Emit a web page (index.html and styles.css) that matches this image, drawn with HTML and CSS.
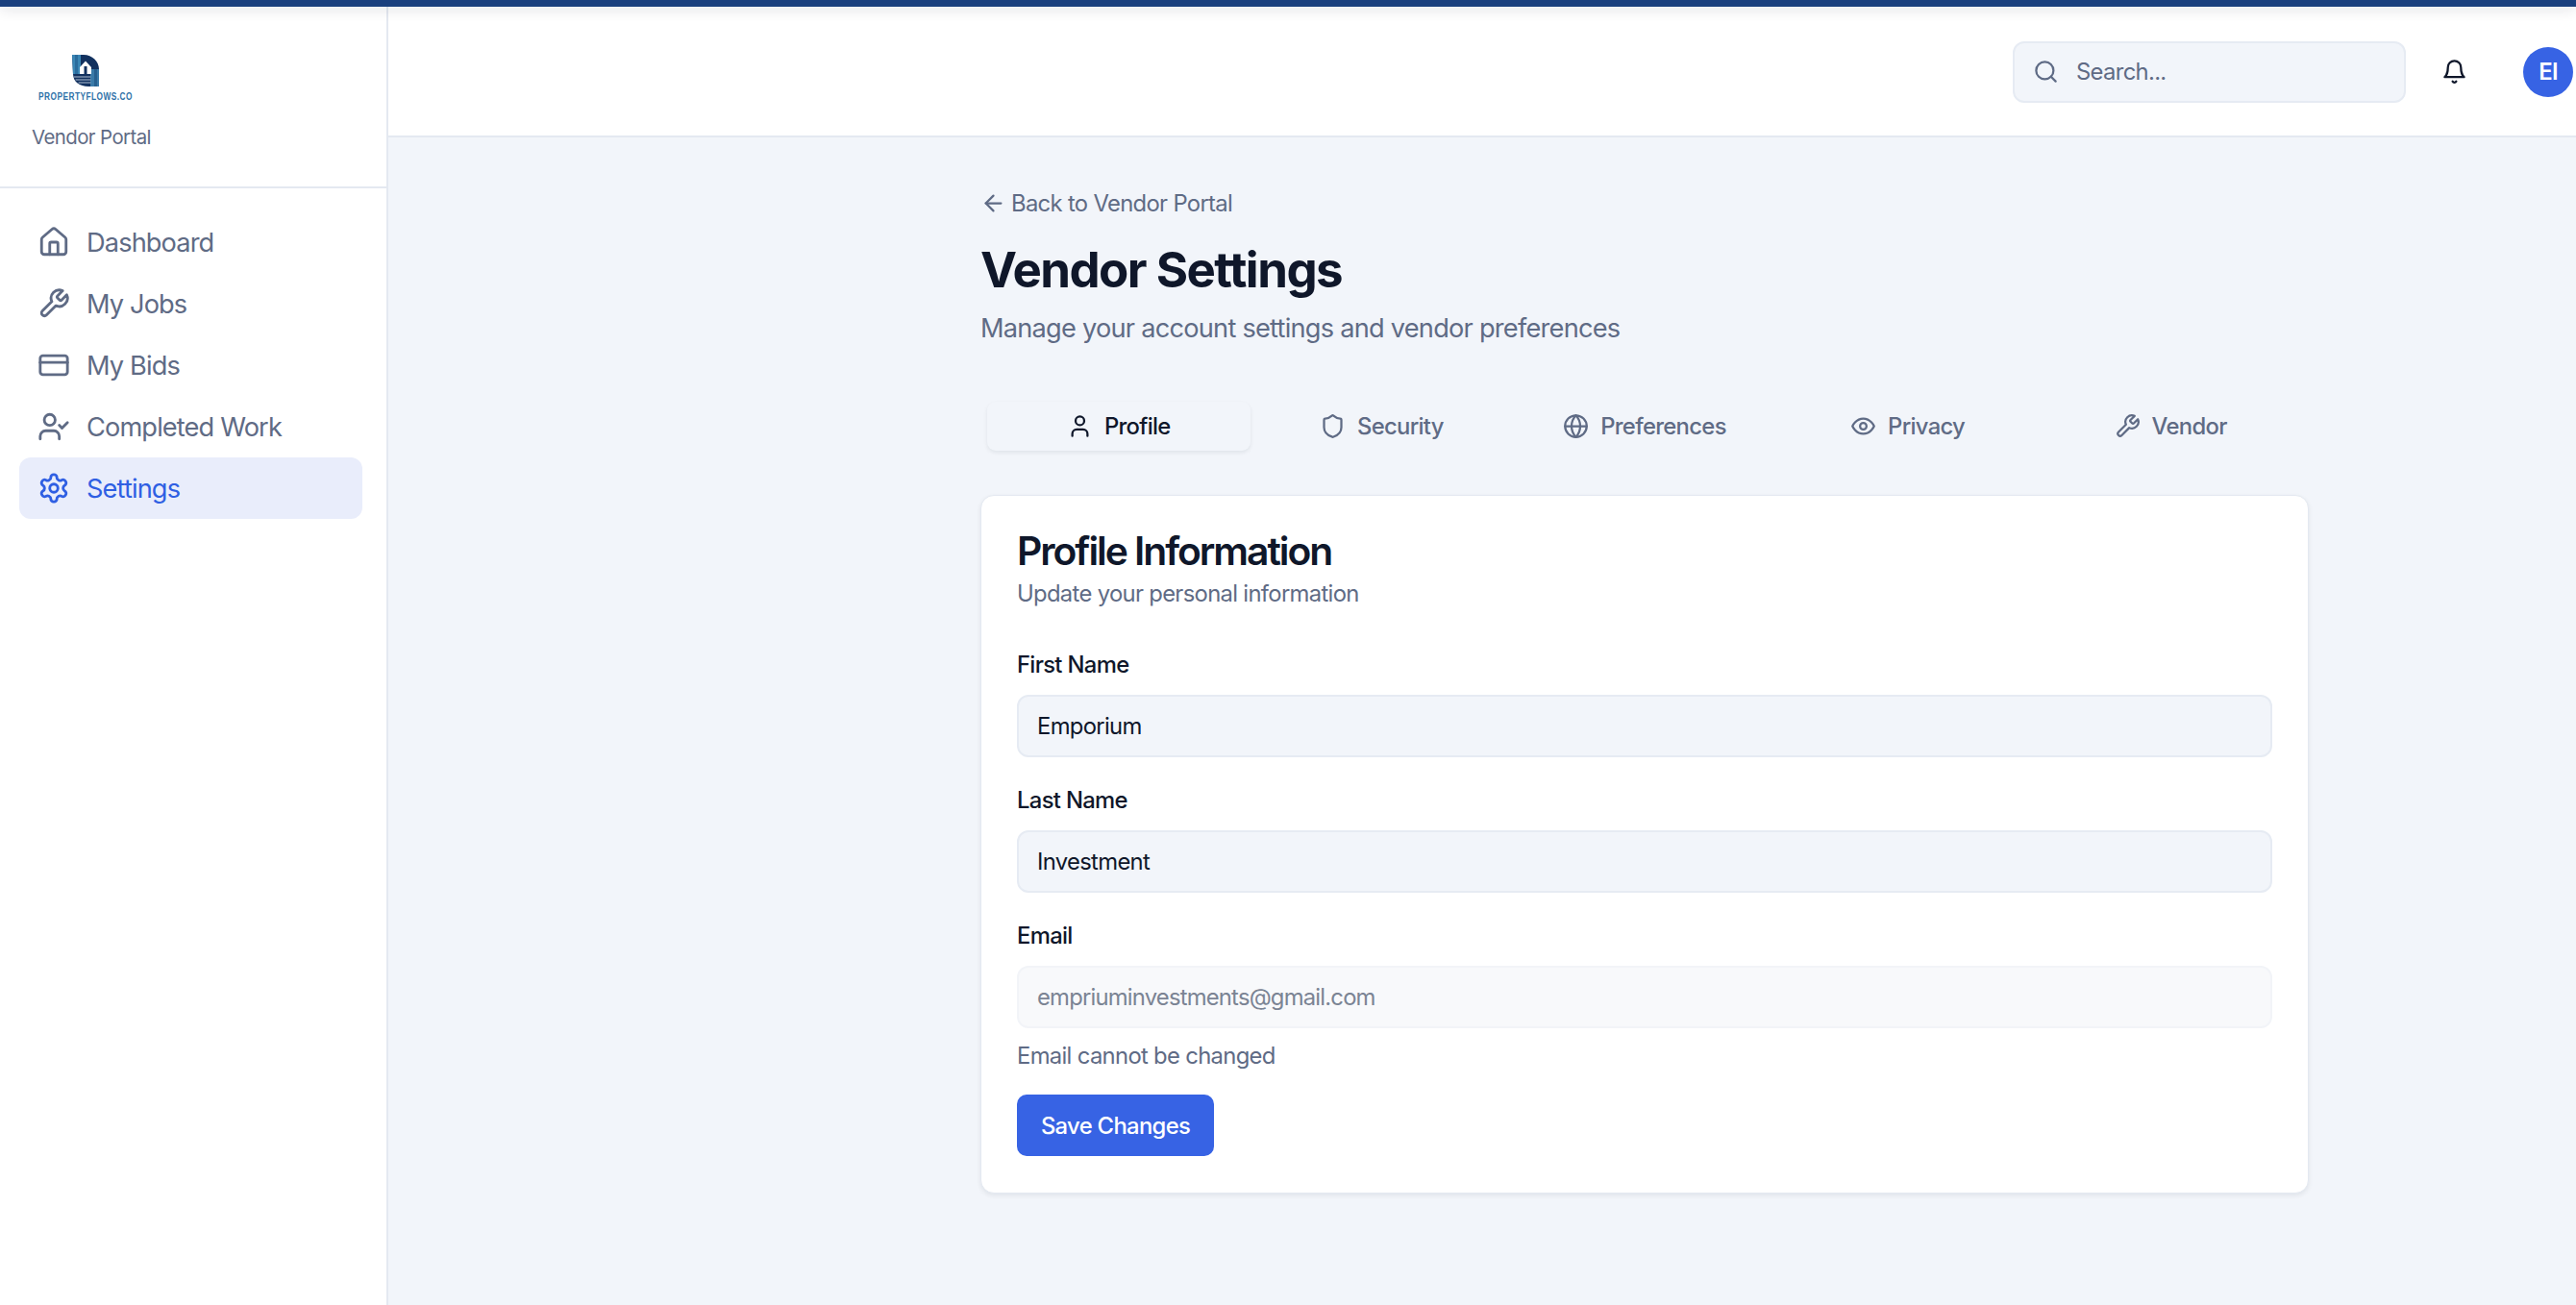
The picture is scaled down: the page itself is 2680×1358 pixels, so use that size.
FILE: index.html
```html
<!DOCTYPE html>
<html lang="en">
  <head>
    <meta charset="UTF-8" />
    <meta name="viewport" content="width=device-width, initial-scale=1.0" />
    <title>Vendor Settings</title>
    <link rel="stylesheet" href="styles.css">
  </head>
  <body>
    <div class="strip"></div>
    <div class="app">
      <aside class="sidebar">
        <div class="brand">
          <div class="logo">
            <svg class="logo-mark" viewBox="0 0 28 33">
              <path d="M0 0H12C21 0 28 7 28 15V33H17C8 33 1 28 1 20Z" fill="#12315f" />
              <path d="M0 0H9V20H1Z" fill="#3a86b5" />
              <path d="M3 0H6V20H3Z" fill="#2a6c9d" />
              <path d="M19 15H28V33H19Z" fill="#3a7aa8" />
              <path d="M23 15H26V33H23Z" fill="#27608f" />
              <path d="M8 13L14 6.500L20 13V20H8Z" fill="#fff" />
              <rect x="12.500" y="12" width="3" height="8" fill="#12315f" />
              <path d="M2 23H19M4 26H19M7 29H19" stroke="#dbe5ef" stroke-width="0.800" />
            </svg>
            <span class="logo-text">PROPERTYFLOWS.CO</span>
          </div>
          <p class="brand-sub">Vendor Portal</p>
        </div>
        <nav class="nav">
          <a class="nav-item">
            <svg class="nav-icon" viewBox="0 0 24 24"><path d="M15 21v-8a1 1 0 0 0-1-1h-4a1 1 0 0 0-1 1v8" /><path d="M3 10a2 2 0 0 1 .709-1.528l7-5.999a2 2 0 0 1 2.582 0l7 5.999A2 2 0 0 1 21 10v9a2 2 0 0 1-2 2H5a2 2 0 0 1-2-2z" /></svg>
            Dashboard
          </a>
          <a class="nav-item">
            <svg class="nav-icon" viewBox="0 0 24 24"><path d="M14.700 6.300a1 1 0 0 0 0 1.400l1.600 1.600a1 1 0 0 0 1.400 0l3.770-3.770a6 6 0 0 1-7.940 7.940l-6.910 6.910a2.120 2.120 0 0 1-3-3l6.910-6.910a6 6 0 0 1 7.940-7.940l-3.760 3.760z" /></svg>
            My Jobs
          </a>
          <a class="nav-item">
            <svg class="nav-icon" viewBox="0 0 24 24"><rect x="2" y="5" width="20" height="14" rx="2" /><path d="M2 10h20" /></svg>
            My Bids
          </a>
          <a class="nav-item">
            <svg class="nav-icon" viewBox="0 0 24 24"><path d="M16 21v-2a4 4 0 0 0-4-4H6a4 4 0 0 0-4 4v2" /><circle cx="9" cy="7" r="4" /><path d="M16 11l2 2 4-4" /></svg>
            Completed Work
          </a>
          <a class="nav-item active">
            <svg class="nav-icon" viewBox="0 0 24 24"><path d="M12.220 2h-.44a2 2 0 0 0-2 2v.18a2 2 0 0 1-1 1.730l-.43.25a2 2 0 0 1-2 0l-.15-.08a2 2 0 0 0-2.730.73l-.22.38a2 2 0 0 0 .73 2.730l.15.1a2 2 0 0 1 1 1.720v.51a2 2 0 0 1-1 1.740l-.15.09a2 2 0 0 0-.73 2.730l.22.38a2 2 0 0 0 2.730.73l.15-.08a2 2 0 0 1 2 0l.43.25a2 2 0 0 1 1 1.730V20a2 2 0 0 0 2 2h.44a2 2 0 0 0 2-2v-.18a2 2 0 0 1 1-1.730l.43-.25a2 2 0 0 1 2 0l.15.08a2 2 0 0 0 2.730-.73l.22-.39a2 2 0 0 0-.73-2.730l-.15-.08a2 2 0 0 1-1-1.740v-.5a2 2 0 0 1 1-1.740l.15-.09a2 2 0 0 0 .73-2.730l-.22-.38a2 2 0 0 0-2.730-.73l-.15.08a2 2 0 0 1-2 0l-.43-.25a2 2 0 0 1-1-1.730V4a2 2 0 0 0-2-2z" /><circle cx="12" cy="12" r="3" /></svg>
            Settings
          </a>
        </nav>
      </aside>

      <div class="main">
        <header class="topbar">
          <label class="search">
            <svg class="search-icon" viewBox="0 0 24 24"><circle cx="11" cy="11" r="8" /><path d="M21 21l-4.300-4.300" /></svg>
            <input class="search-input" type="text" placeholder="Search..." />
          </label>
          <svg class="bell" viewBox="0 0 24 24"><path d="M6 8a6 6 0 0 1 12 0c0 7 3 9 3 9H3s3-2 3-9" /><path d="M10.300 21a1.940 1.940 0 0 0 3.400 0" /></svg>
          <div class="avatar">EI</div>
        </header>

        <main class="content">
          <a class="back">
            <svg class="back-icon" viewBox="0 0 24 24"><path d="M12 19l-7-7 7-7" /><path d="M19 12H5" /></svg>
            Back to Vendor Portal
          </a>
          <h1 class="title">Vendor Settings</h1>
          <p class="subtitle">Manage your account settings and vendor preferences</p>

          <div class="tabs">
            <button class="tab active">
              <svg class="tab-icon" viewBox="0 0 24 24"><path d="M19 21v-2a4 4 0 0 0-4-4H9a4 4 0 0 0-4 4v2" /><circle cx="12" cy="7" r="4" /></svg>
              Profile
            </button>
            <button class="tab">
              <svg class="tab-icon" viewBox="0 0 24 24"><path d="M20 13c0 5-3.500 7.500-7.660 8.950a1 1 0 0 1-.67-.01C7.500 20.500 4 18 4 13V6a1 1 0 0 1 1-1c2 0 4.500-1.200 6.240-2.720a1.170 1.170 0 0 1 1.520 0C14.510 3.810 17 5 19 5a1 1 0 0 1 1 1z" /></svg>
              Security
            </button>
            <button class="tab">
              <svg class="tab-icon" viewBox="0 0 24 24"><circle cx="12" cy="12" r="10" /><path d="M12 2a14.500 14.500 0 0 0 0 20 14.500 14.500 0 0 0 0-20" /><path d="M2 12h20" /></svg>
              Preferences
            </button>
            <button class="tab">
              <svg class="tab-icon" viewBox="0 0 24 24"><path d="M2 12s3-7 10-7 10 7 10 7-3 7-10 7-10-7-10-7Z" /><circle cx="12" cy="12" r="3" /></svg>
              Privacy
            </button>
            <button class="tab">
              <svg class="tab-icon" viewBox="0 0 24 24"><path d="M14.700 6.300a1 1 0 0 0 0 1.400l1.600 1.600a1 1 0 0 0 1.400 0l3.770-3.770a6 6 0 0 1-7.940 7.940l-6.910 6.910a2.120 2.120 0 0 1-3-3l6.910-6.910a6 6 0 0 1 7.940-7.940l-3.760 3.760z" /></svg>
              Vendor
            </button>
          </div>

          <section class="card">
            <h2 class="card-title">Profile Information</h2>
            <p class="card-sub">Update your personal information</p>
            <form class="form">
              <label class="field-label">First Name</label>
              <input class="field" type="text" value="Emporium" />
              <label class="field-label">Last Name</label>
              <input class="field" type="text" value="Investment" />
              <label class="field-label">Email</label>
              <input class="field disabled" type="text" value="empriuminvestments@gmail.com" disabled />
              <p class="help">Email cannot be changed</p>
              <button class="save" type="button">Save Changes</button>
            </form>
          </section>
        </main>
      </div>
    </div>
  </body>
</html>
```

FILE: styles.css
```css
* {
  box-sizing: border-box;
  letter-spacing: -0.028em;
}

html,
body {
  height: 100%;
}

body {
  margin: 0;
  display: flex;
  flex-direction: column;
  overflow: hidden;
  background: #f2f5fa;
  color: #0f172a;
  font-family: Inter, "Liberation Sans", sans-serif;
}

p,
h1,
h2 {
  margin: 0;
}

svg {
  fill: none;
  stroke: currentColor;
  stroke-width: 2;
  stroke-linecap: round;
  stroke-linejoin: round;
  flex-shrink: 0;
}

.strip {
  position: relative;
  z-index: 2;
  height: 7px;
  background: #1a407e;
  box-shadow: 0 3px 14px rgba(15, 23, 42, 0.14);
}

.app {
  flex: 1;
  display: flex;
  min-height: 0;
}

/* sidebar */
.sidebar {
  width: 404px;
  background: #fff;
  border-right: 2px solid #e4e9f1;
}

.brand {
  height: 189px;
  padding: 50px 0 0 33px;
  border-bottom: 2px solid #e4e9f1;
}

.logo {
  width: 106px;
  margin-left: 3px;
  display: flex;
  flex-direction: column;
  align-items: center;
}

.logo-mark {
  width: 28px;
  height: 33px;
  stroke: none;
}

.logo-text {
  margin-top: 5px;
  font-family: "Liberation Sans", sans-serif;
  font-size: 10.500px;
  line-height: 10px;
  font-weight: 700;
  letter-spacing: 0.600px;
  color: #2f72a8;
  white-space: nowrap;
  transform: scaleX(0.79);
}

.brand-sub {
  margin-top: 23px;
  font-size: 20.400px;
  line-height: 30px;
  color: #5f6b85;
}

.nav {
  padding: 24px 25px 0 20px;
}

.nav-item {
  height: 64px;
  padding-left: 19px;
  display: flex;
  align-items: center;
  gap: 17px;
  border-radius: 12px;
  font-size: 27.200px;
  letter-spacing: -0.032em;
  color: #5f6b85;
}

.nav-item.active {
  background: #e9edfb;
  color: #2f5fe3;
}

.nav-icon {
  width: 34px;
  height: 34px;
}

/* top bar */
.main {
  flex: 1;
  min-width: 0;
}

.topbar {
  height: 136px;
  padding: 1px 3px 0 0;
  display: flex;
  align-items: center;
  justify-content: flex-end;
  background: #fff;
  border-bottom: 2px solid #e4e9f1;
}

.search {
  width: 409px;
  height: 64px;
  padding-left: 19px;
  display: flex;
  align-items: center;
  gap: 16px;
  background: #f2f5fa;
  border: 2px solid #e6ebf3;
  border-radius: 12px;
  color: #5f6b85;
}

.search-icon {
  width: 27px;
  height: 27px;
}

.search-input {
  flex: 1;
  min-width: 0;
  border: 0;
  outline: 0;
  background: transparent;
  font-family: inherit;
  font-size: 23.800px;
}

.search-input::placeholder {
  color: #5f6b85;
  opacity: 1;
}

.bell {
  width: 27px;
  height: 27px;
  margin-left: 37px;
  color: #0f172a;
}

.avatar {
  width: 52px;
  height: 52px;
  margin-left: 58px;
  display: flex;
  align-items: center;
  justify-content: center;
  border-radius: 50%;
  background: #3763e4;
  color: #fff;
  font-size: 23.800px;
  font-weight: 600;
}

/* settings page */
.content {
  width: 1382px;
  margin-left: 616px;
  padding-top: 51px;
}

.back {
  height: 34px;
  display: flex;
  align-items: center;
  gap: 5px;
  font-size: 23.800px;
  color: #5f6b85;
}

.back-icon {
  width: 27px;
  height: 27px;
}

.title {
  margin-top: 22px;
  font-size: 51px;
  line-height: 61px;
  font-weight: 700;
  letter-spacing: -0.030em;
}

.subtitle {
  margin-top: 11px;
  font-size: 27.200px;
  line-height: 40px;
  color: #5f6b85;
}

.tabs {
  margin-top: 49px;
  padding: 7px;
  display: grid;
  grid-template-columns: repeat(5, 1fr);
}

.tab {
  height: 51px;
  display: flex;
  align-items: center;
  justify-content: center;
  gap: 12px;
  border: 0;
  border-radius: 9px;
  background: transparent;
  font-family: inherit;
  font-size: 23.800px;
  font-weight: 500;
  color: #5f6b85;
}

.tab.active {
  background: #f2f5fa;
  color: #0f172a;
  box-shadow: 0 2px 4px rgba(15, 23, 42, 0.08);
}

.tab-icon {
  width: 27px;
  height: 27px;
}

.card {
  margin-top: 39px;
  padding: 33px 37px 38px;
  background: #fff;
  border: 1px solid #e4e9f1;
  border-radius: 14px;
  box-shadow: 0 2px 5px rgba(15, 23, 42, 0.08);
}

.card-title {
  font-size: 40.800px;
  line-height: 48px;
  font-weight: 600;
  letter-spacing: -0.050em;
}

.card-sub {
  margin-top: 4px;
  font-size: 23.800px;
  line-height: 34px;
  color: #5f6b85;
}

.form {
  margin-top: 40px;
}

.field-label {
  display: block;
  font-size: 23.800px;
  line-height: 34px;
  font-weight: 500;
}

.field {
  display: block;
  width: 100%;
  height: 65px;
  margin: 14px 0 28px;
  padding: 0 19px;
  background: #f2f5fa;
  border: 2px solid #e6ebf3;
  border-radius: 12px;
  outline: 0;
  font-family: inherit;
  font-size: 23.800px;
  color: #0f172a;
}

.field.disabled {
  margin-bottom: 12px;
  background: #f8f9fb;
  border-color: #f2f4f8;
  color: #7b8494;
  letter-spacing: -0.033em;
}

.help {
  font-size: 23.800px;
  line-height: 34px;
  color: #5f6b85;
}

.save {
  display: block;
  width: 205px;
  height: 64px;
  margin-top: 23px;
  border: 0;
  border-radius: 10px;
  background: #3763e4;
  color: #fff;
  font-family: inherit;
  font-size: 23.800px;
  font-weight: 500;
}
```
